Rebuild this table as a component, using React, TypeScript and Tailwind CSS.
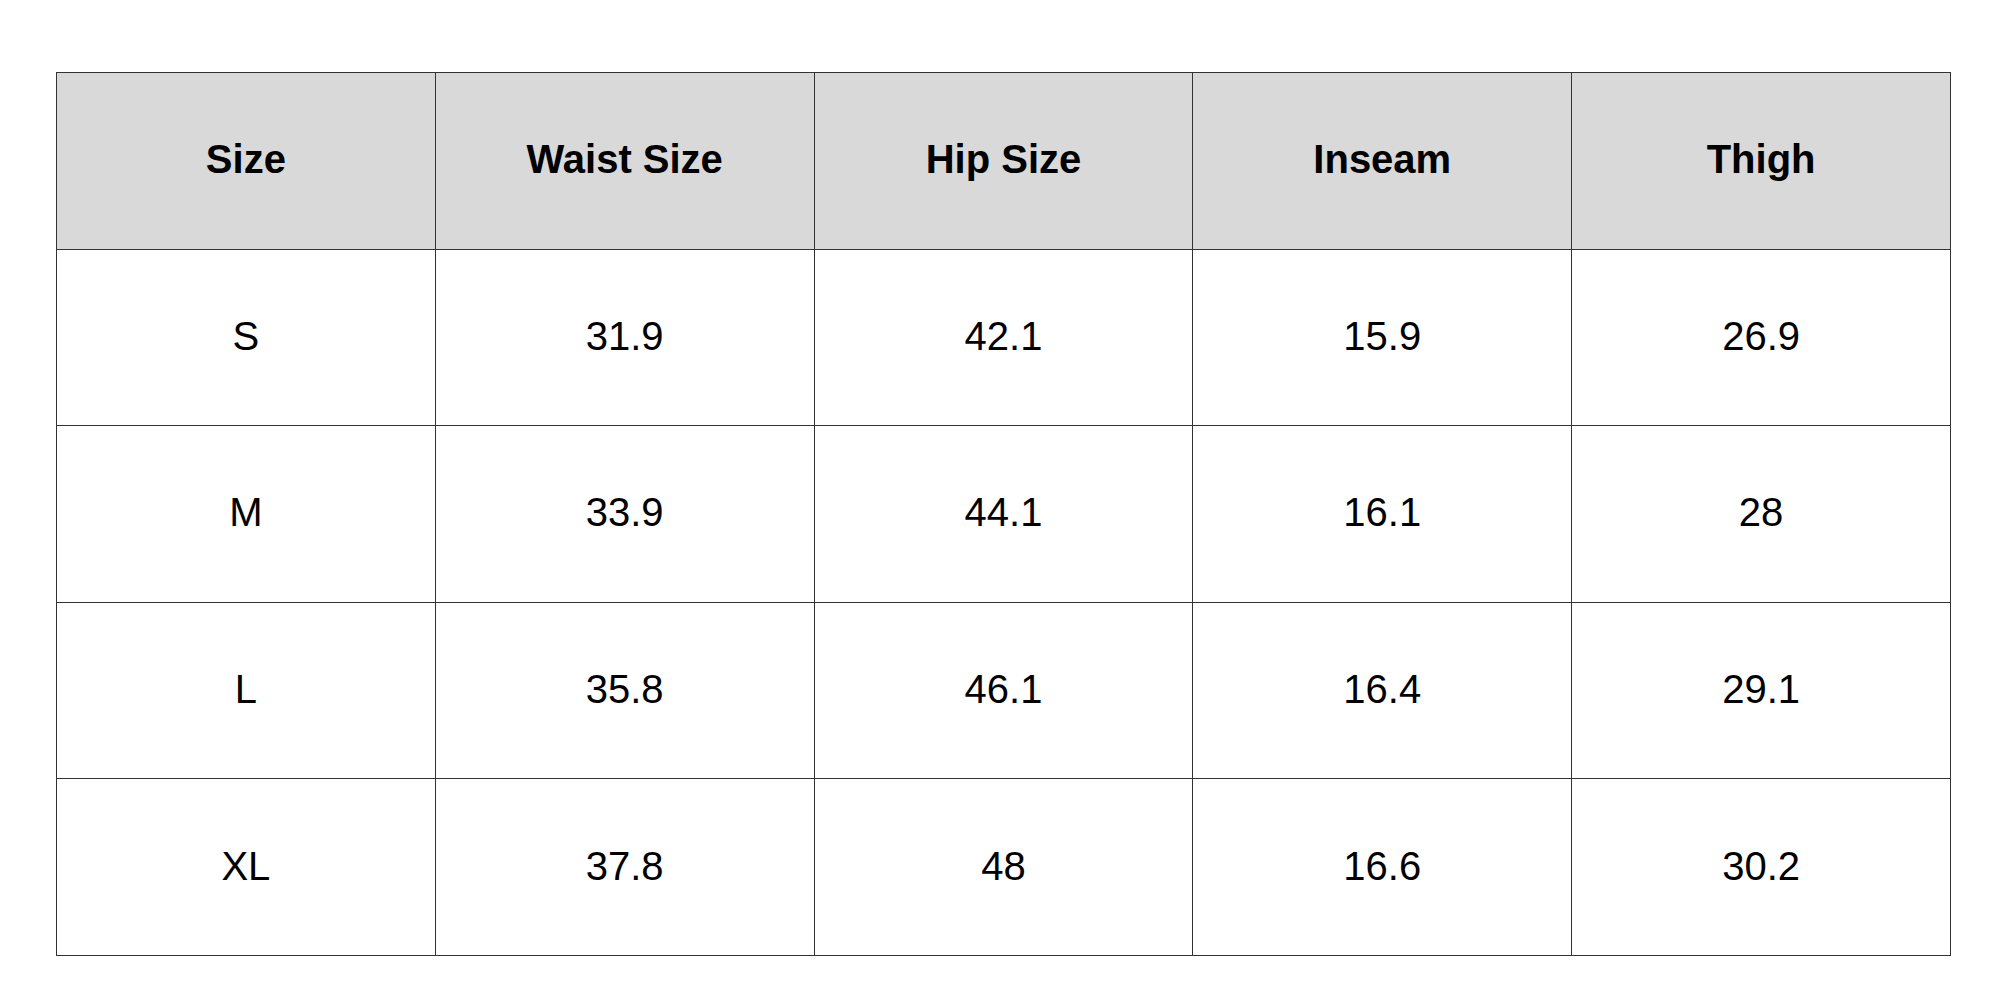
import React from "react";

const headers = ["Size", "Waist Size", "Hip Size", "Inseam", "Thigh"];
const rows = [
  ["S", "31.9", "42.1", "15.9", "26.9"],
  ["M", "33.9", "44.1", "16.1", "28"],
  ["L", "35.8", "46.1", "16.4", "29.1"],
  ["XL", "37.8", "48", "16.6", "30.2"],
];

export default function App() {
  return (
    <div className="w-[2000px] h-[1000px] bg-white pt-[72px] pl-[56px]" style={{ fontFamily: '"Liberation Sans", Arial, sans-serif' }}>
      <table className="border-collapse w-[1895px] text-[40px] text-black">
        <thead>
          <tr>
            {headers.map((h) => (
              <th key={h} className="h-[176.6px] w-[379px] border border-[#333333] bg-[#d9d9d9] font-bold text-center align-middle p-0 pb-[3px]">
                {h}
              </th>
            ))}
          </tr>
        </thead>
        <tbody>
          {rows.map((r, i) => (
            <tr key={i}>
              {r.map((c, j) => (
                <td key={j} className="h-[176.6px] w-[379px] border border-[#333333] text-center align-middle p-0 pb-[3px]">
                  {c}
                </td>
              ))}
            </tr>
          ))}
        </tbody>
      </table>
    </div>
  );
}
